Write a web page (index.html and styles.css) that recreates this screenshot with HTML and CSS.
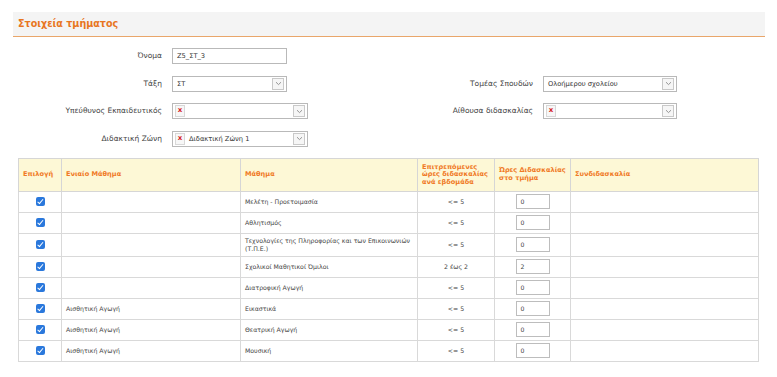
FILE: index.html
```html
<!DOCTYPE html>
<html lang="el">
<head>
  <meta charset="UTF-8" />
  <title>Στοιχεία τμήματος</title>
  <link rel="stylesheet" href="styles.css">
</head>
<body>
  <div class="page">
    <div class="section-title">Στοιχεία τμήματος</div>

    <div class="form">
      <label class="lbl">Όνομα</label>
      <div class="field"><div class="textbox short">Z5_ΣΤ_3</div></div>
      <div></div>
      <div></div>

      <label class="lbl">Τάξη</label>
      <div class="field">
        <div class="combo short"><span class="val">ΣΤ</span><span class="arrow"><svg width="7" height="5" viewBox="0 0 7 5"><path d="M1 1.2 L3.5 3.6 L6 1.2" fill="none" stroke="#8a8a8a" stroke-width="0.9"/></svg></span></div>
      </div>
      <label class="lbl">Τομέας Σπουδών</label>
      <div class="field">
        <div class="combo"><span class="val">Ολοήμερου σχολείου</span><span class="arrow"><svg width="7" height="5" viewBox="0 0 7 5"><path d="M1 1.2 L3.5 3.6 L6 1.2" fill="none" stroke="#8a8a8a" stroke-width="0.9"/></svg></span></div>
      </div>

      <label class="lbl">Υπεύθυνος Εκπαιδευτικός</label>
      <div class="field">
        <div class="combo"><span class="clear">x</span><span class="val"></span><span class="arrow"><svg width="7" height="5" viewBox="0 0 7 5"><path d="M1 1.2 L3.5 3.6 L6 1.2" fill="none" stroke="#8a8a8a" stroke-width="0.9"/></svg></span></div>
      </div>
      <label class="lbl">Αίθουσα διδασκαλίας</label>
      <div class="field">
        <div class="combo"><span class="clear">x</span><span class="val"></span><span class="arrow"><svg width="7" height="5" viewBox="0 0 7 5"><path d="M1 1.2 L3.5 3.6 L6 1.2" fill="none" stroke="#8a8a8a" stroke-width="0.9"/></svg></span></div>
      </div>

      <label class="lbl">Διδακτική Ζώνη</label>
      <div class="field">
        <div class="combo"><span class="clear">x</span><span class="val">Διδακτική Ζώνη 1</span><span class="arrow"><svg width="7" height="5" viewBox="0 0 7 5"><path d="M1 1.2 L3.5 3.6 L6 1.2" fill="none" stroke="#8a8a8a" stroke-width="0.9"/></svg></span></div>
      </div>
      <div></div>
      <div></div>
    </div>

    <table class="lessons">
      <colgroup>
        <col style="width:43px">
        <col style="width:179px">
        <col style="width:177px">
        <col style="width:77px">
        <col style="width:76px">
        <col>
      </colgroup>
      <thead>
        <tr>
          <th>Επιλογή</th>
          <th>Ενιαίο Μάθημα</th>
          <th>Μάθημα</th>
          <th>Επιτρεπόμενες ώρες διδασκαλίας ανά εβδομάδα</th>
          <th>Ώρες Διδασκαλίας στο τμήμα</th>
          <th>Συνδιδασκαλία</th>
        </tr>
      </thead>
      <tbody>
        <tr>
          <td class="chk"><span class="check"></span></td>
          <td></td>
          <td>Μελέτη - Προετοιμασία</td>
          <td class="num">&lt;= 5</td>
          <td class="hrs"><span class="hbox">0</span></td>
          <td></td>
        </tr>
        <tr>
          <td class="chk"><span class="check"></span></td>
          <td></td>
          <td>Αθλητισμός</td>
          <td class="num">&lt;= 5</td>
          <td class="hrs"><span class="hbox">0</span></td>
          <td></td>
        </tr>
        <tr class="tall">
          <td class="chk"><span class="check"></span></td>
          <td></td>
          <td>Τεχνολογίες της Πληροφορίας και των Επικοινωνιών (Τ.Π.Ε.)</td>
          <td class="num">&lt;= 5</td>
          <td class="hrs"><span class="hbox">0</span></td>
          <td></td>
        </tr>
        <tr>
          <td class="chk"><span class="check"></span></td>
          <td></td>
          <td>Σχολικοί Μαθητικοί Όμιλοι</td>
          <td class="num">2 έως 2</td>
          <td class="hrs"><span class="hbox">2</span></td>
          <td></td>
        </tr>
        <tr>
          <td class="chk"><span class="check"></span></td>
          <td></td>
          <td>Διατροφική Αγωγή</td>
          <td class="num">&lt;= 5</td>
          <td class="hrs"><span class="hbox">0</span></td>
          <td></td>
        </tr>
        <tr>
          <td class="chk"><span class="check"></span></td>
          <td>Αισθητική Αγωγή</td>
          <td>Εικαστικά</td>
          <td class="num">&lt;= 5</td>
          <td class="hrs"><span class="hbox">0</span></td>
          <td></td>
        </tr>
        <tr>
          <td class="chk"><span class="check"></span></td>
          <td>Αισθητική Αγωγή</td>
          <td>Θεατρική Αγωγή</td>
          <td class="num">&lt;= 5</td>
          <td class="hrs"><span class="hbox">0</span></td>
          <td></td>
        </tr>
        <tr>
          <td class="chk"><span class="check"></span></td>
          <td>Αισθητική Αγωγή</td>
          <td>Μουσική</td>
          <td class="num">&lt;= 5</td>
          <td class="hrs"><span class="hbox">0</span></td>
          <td></td>
        </tr>
      </tbody>
    </table>
  </div>
</body>
</html>
```

FILE: styles.css
```css
* {
  margin: 0;
  padding: 0;
  box-sizing: border-box;
}

body {
  font-family: "DejaVu Sans", Verdana, sans-serif;
  background: #ffffff;
  color: #333333;
}

.page {
  padding: 12px 12px 0 13px;
}

.section-title {
  background: #f4f4f4;
  border-bottom: 1px solid #e9a66a;
  height: 25px;
  padding: 0 5px;
  line-height: 24px;
  font-size: 9.6px;
  font-weight: bold;
  color: #e8761f;
}

/* form fields */
.form {
  display: grid;
  grid-template-columns: 149px 136px 215px 134px;
  column-gap: 10px;
  row-gap: 11.67px;
  margin-top: 11px;
  width: 680px;
}

.lbl {
  font-size: 7.5px;
  color: #444444;
  text-align: right;
  height: 16px;
  line-height: 16px;
}

.field {
  height: 16px;
}

.textbox,
.combo {
  height: 16px;
  border: 1px solid #b9b9b9;
  background: #ffffff;
  font-size: 6.7px;
  color: #333333;
  display: flex;
  align-items: center;
}

.textbox {
  padding-left: 4px;
}

.short {
  width: 115px;
}

.combo .val {
  flex: 1;
  padding-left: 4px;
  white-space: nowrap;
}

.combo .clear {
  width: 10px;
  height: 12px;
  margin-left: 2px;
  border: 1px solid #d8d8d8;
  background: #f7f7f7;
  color: #d42020;
  font-size: 7px;
  font-weight: bold;
  line-height: 9px;
  text-align: center;
}

.combo .arrow {
  width: 12px;
  height: 12px;
  margin-right: 2px;
  border: 1px solid #c9c9c9;
  background: #f6f6f6;
  display: flex;
  align-items: center;
  justify-content: center;
}

/* table */
.lessons {
  margin: 11px 6px 0 5px;
  width: 741px;
  border-collapse: collapse;
  table-layout: fixed;
  border: 1px solid #bdbdbd;
}

.lessons th {
  background: #fdf8d6;
  color: #f07a26;
  font-size: 6.6px;
  font-weight: bold;
  text-align: left;
  padding: 2px 4px;
  height: 33px;
  line-height: 7.5px;
  border: 1px solid #d6d6d6;
}

.lessons td {
  font-size: 6.2px;
  color: #444444;
  height: 21px;
  padding: 0 4px;
  border: 1px solid #d9d9d9;
  line-height: 8px;
}

.lessons tr.tall td {
  height: 23px;
}

.lessons td.chk,
.lessons td.num,
.lessons td.hrs {
  text-align: center;
}

.check {
  display: inline-block;
  width: 9px;
  height: 9px;
  border-radius: 2px;
  background: #2a78dc;
  position: relative;
  vertical-align: middle;
}

.check::after {
  content: "";
  position: absolute;
  left: 3px;
  top: 1px;
  width: 2px;
  height: 4.5px;
  border: solid #ffffff;
  border-width: 0 1.5px 1.5px 0;
  transform: rotate(40deg);
}

.hbox {
  display: inline-block;
  width: 34px;
  height: 15px;
  border: 1px solid #bdbdbd;
  text-align: left;
  padding-left: 4px;
  line-height: 13px;
  vertical-align: middle;
}
```
